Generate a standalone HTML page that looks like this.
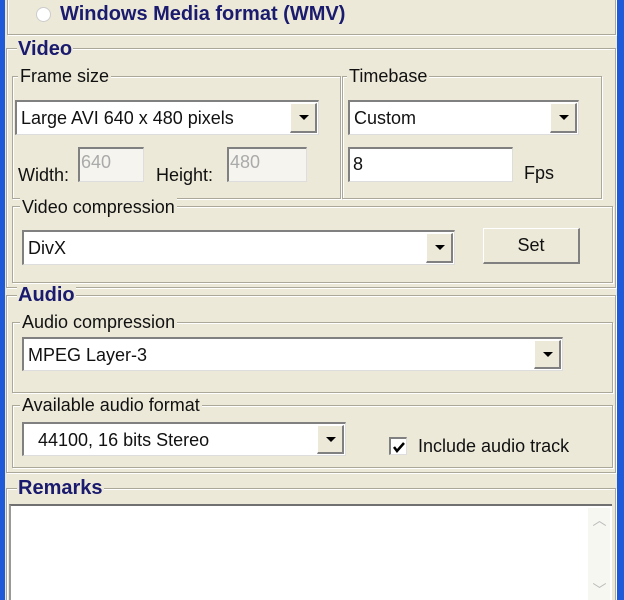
<!DOCTYPE html>
<html><head><style>
html,body{margin:0;width:624px;height:600px;overflow:hidden}
body{background:#ECE9D8;font-family:"Liberation Sans",sans-serif;position:relative}
.a{position:absolute}
.g{position:absolute;border:1px solid #aca899;box-shadow:inset 1px 1px #fff,1px 1px #fff}
.t{position:absolute;background:#ECE9D8;font-size:18px;color:#111;padding:0 2px;line-height:18px}
.b{position:absolute;background:#ECE9D8;font-size:20px;font-weight:bold;color:#1a1a6e;padding:0 1px;line-height:18px}
.c{position:absolute;background:#fff;border-top:2px solid #808080;border-left:2px solid #808080;border-bottom:1px solid #ddd;border-right:1px solid #ddd;box-sizing:border-box;font-size:18px;color:#111}
.c span{position:absolute;left:4px;top:6px}
.btn{position:absolute;right:1px;top:1px;bottom:1px;width:27px;background:#ECE9D8;border-top:1px solid #fff;border-left:1px solid #fff;border-right:2px solid #808080;border-bottom:2px solid #808080;box-sizing:border-box}
.btn:after{content:"";position:absolute;left:8px;top:11px;border-left:5px solid transparent;border-right:5px solid transparent;border-top:5px solid #000}
.txt{font-size:18px;color:#111;position:absolute}
</style></head><body>
<div class="a" style="left:0;top:0;width:5px;height:600px;background:#1f5ad8"></div>
<div class="a" style="left:617px;top:0;width:7px;height:600px;background:#1f5ad8"></div>
<div class="g" style="left:7px;top:-5px;width:607px;height:38px"></div>
<div class="a" style="left:36px;top:7px;width:13px;height:13px;border-radius:50%;background:#fff;border:1px solid #ccc"></div>
<div class="b" style="left:59px;top:5px;background:none">Windows Media format (WMV)</div>

<div class="g" style="left:6px;top:48px;width:608px;height:238px"></div>
<div class="b" style="left:17px;top:40px">Video</div>
<div class="g" style="left:12px;top:76px;width:327px;height:121px"></div>
<div class="t" style="left:18px;top:67px">Frame size</div>
<div class="c" style="left:15px;top:100px;width:304px;height:35px"><span>Large AVI 640 x 480 pixels</span><div class="btn"></div></div>
<div class="txt" style="left:18px;top:165px">Width:</div>
<div class="c" style="left:78px;top:147px;width:66px;height:35px;background:#f5f4ef"><span style="top:3px;left:1px;color:#aaa">640</span></div>
<div class="txt" style="left:156px;top:165px">Height:</div>
<div class="c" style="left:227px;top:147px;width:80px;height:35px;background:#f5f4ef"><span style="top:3px;left:1px;color:#aaa">480</span></div>
<div class="g" style="left:342px;top:76px;width:258px;height:121px"></div>
<div class="t" style="left:347px;top:67px">Timebase</div>
<div class="c" style="left:348px;top:100px;width:231px;height:35px"><span>Custom</span><div class="btn"></div></div>
<div class="c" style="left:348px;top:147px;width:165px;height:35px"><span style="top:5px;left:3px">8</span></div>
<div class="txt" style="left:524px;top:163px">Fps</div>
<div class="g" style="left:12px;top:206px;width:599px;height:75px"></div>
<div class="t" style="left:20px;top:198px">Video compression</div>
<div class="c" style="left:22px;top:230px;width:433px;height:35px"><span>DivX</span><div class="btn"></div></div>
<div class="a" style="left:483px;top:228px;width:97px;height:36px;box-sizing:border-box;border-top:1px solid #fff;border-left:1px solid #fff;border-right:2px solid #808080;border-bottom:2px solid #808080;font-size:18px;text-align:center;line-height:32px;color:#111">Set</div>

<div class="g" style="left:6px;top:295px;width:608px;height:176px"></div>
<div class="b" style="left:17px;top:286px">Audio</div>
<div class="g" style="left:12px;top:322px;width:599px;height:69px"></div>
<div class="t" style="left:20px;top:313px">Audio compression</div>
<div class="c" style="left:22px;top:337px;width:541px;height:34px"><span>MPEG Layer-3</span><div class="btn"></div></div>
<div class="g" style="left:12px;top:405px;width:599px;height:61px"></div>
<div class="t" style="left:20px;top:396px">Available audio format</div>
<div class="c" style="left:22px;top:422px;width:324px;height:34px"><span style="left:14px">44100, 16 bits Stereo</span><div class="btn"></div></div>
<div class="a" style="left:389px;top:437px;width:18px;height:18px;box-sizing:border-box;background:#fff;border-top:2px solid #808080;border-left:2px solid #808080;border-right:1px solid #ddd;border-bottom:1px solid #ddd"><svg width="14" height="14" style="position:absolute;left:1px;top:1px"><path d="M2 7 L5 11 L12 3" stroke="#000" stroke-width="2.5" fill="none"/></svg></div>
<div class="txt" style="left:418px;top:436px">Include audio track</div>

<div class="g" style="left:6px;top:488px;width:608px;height:120px"></div>
<div class="b" style="left:17px;top:479px">Remarks</div>
<div class="a" style="left:9px;top:504px;width:603px;height:100px;background:#fff;border-top:2px solid #707070;border-left:2px solid #999;box-sizing:border-box"></div>
<div class="a" style="left:588px;top:508px;width:22px;height:92px;background:#f7f7f2"></div>
<div class="a" style="left:590px;top:510px;width:19px;height:22px;color:#bbb;font-size:14px;text-align:center">︿</div>
<div class="a" style="left:590px;top:580px;width:19px;height:20px;color:#bbb;font-size:14px;text-align:center">﹀</div>
</body></html>
